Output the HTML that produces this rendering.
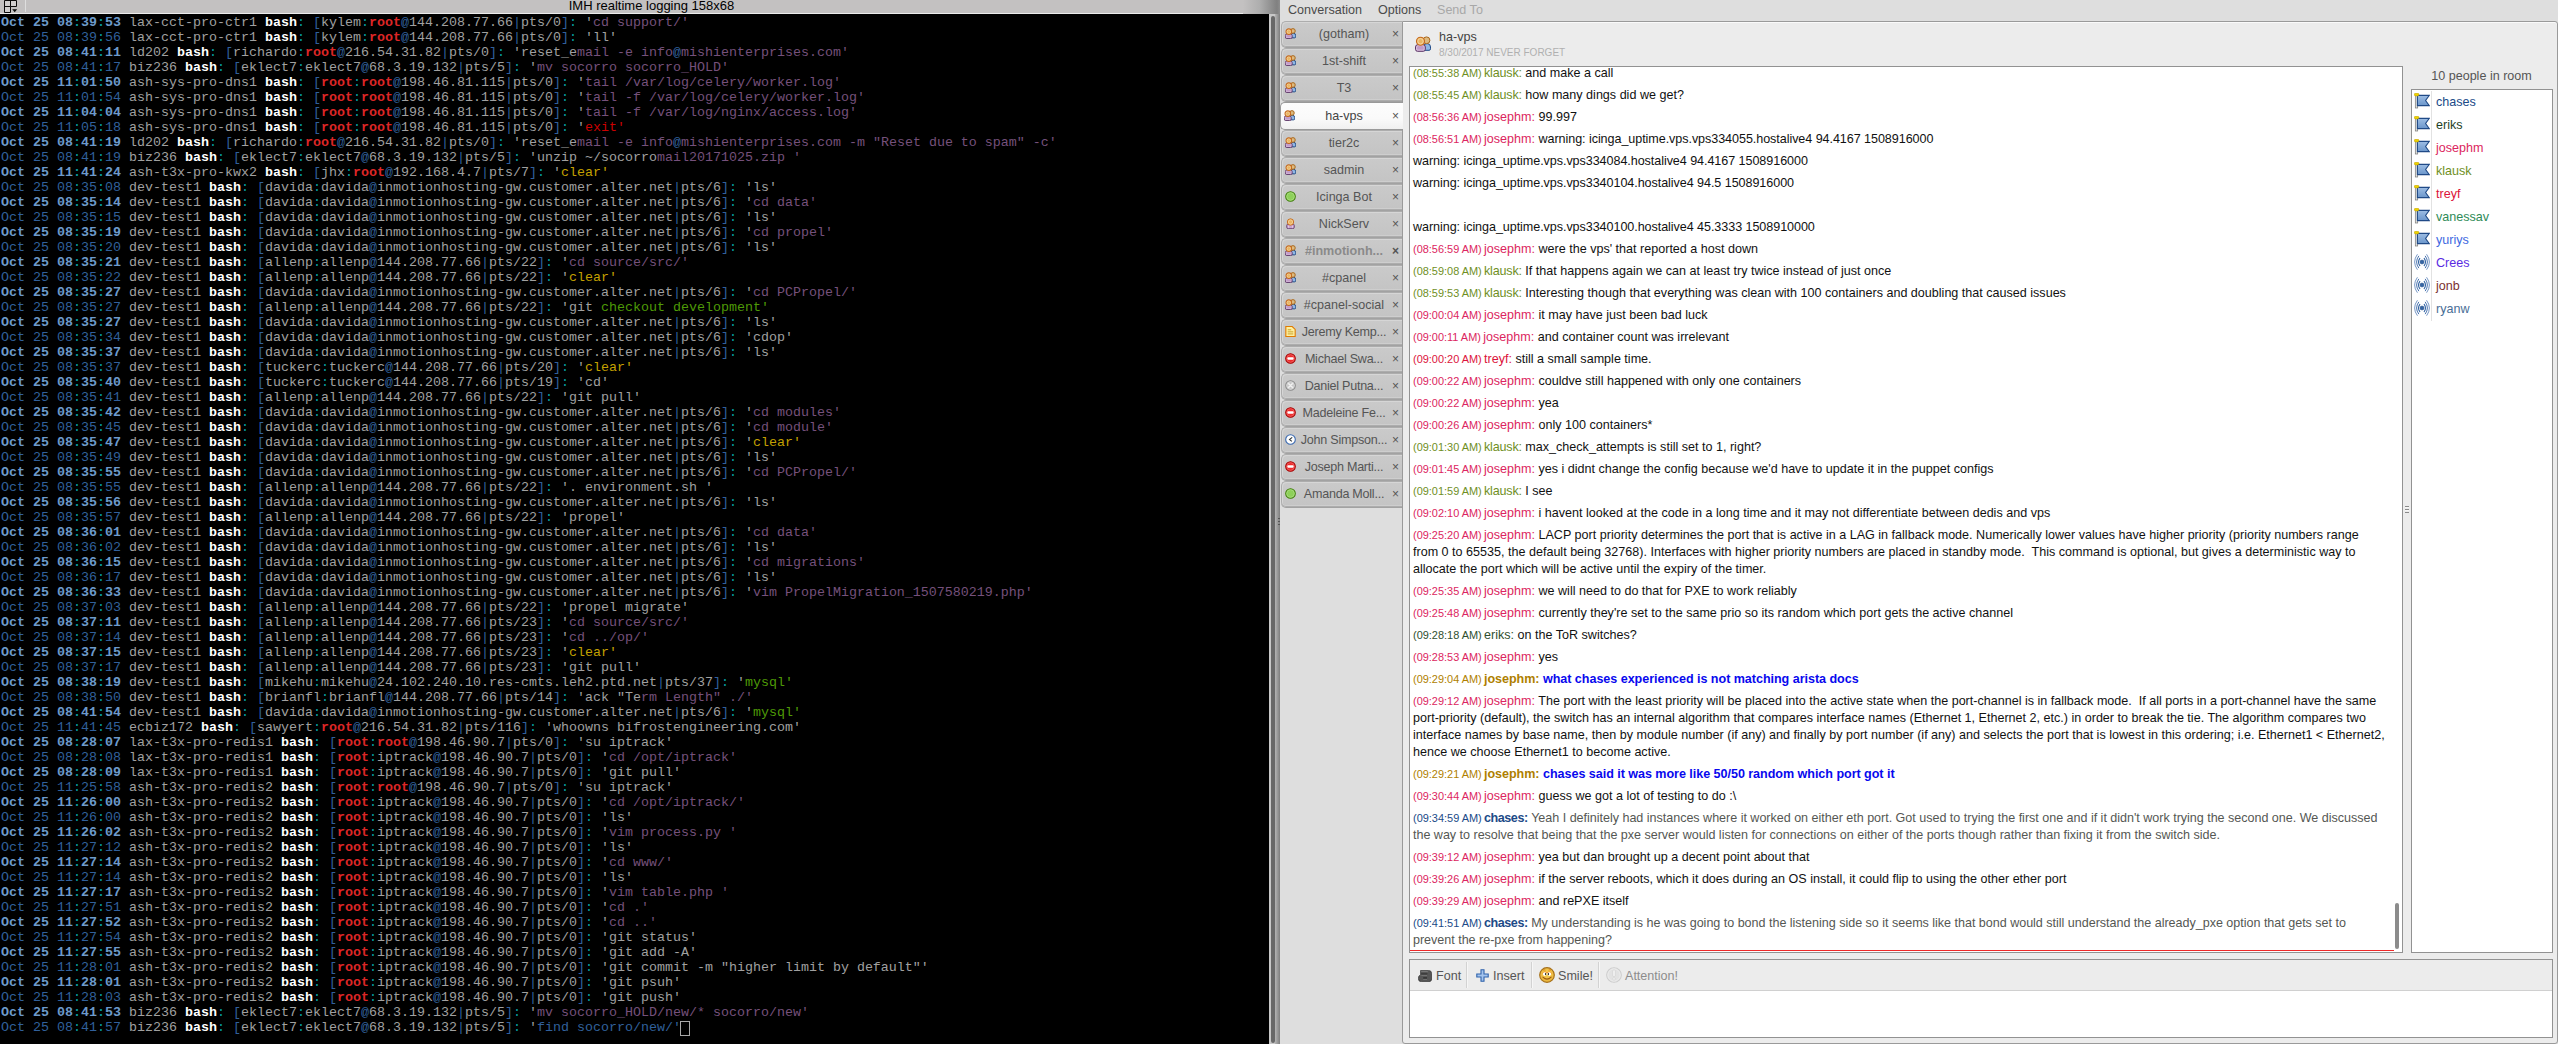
<!DOCTYPE html>
<html lang="en"><head><meta charset="utf-8"><title>IMH realtime logging / ha-vps</title>
<style>
*{margin:0;padding:0;box-sizing:border-box}
html,body{width:2558px;height:1044px;overflow:hidden;background:#dedede}
body{position:relative;font-family:"Liberation Sans",sans-serif;font-size:12.57px;color:#4a4a4a}
i{font-style:normal}
/* ---- terminal window ---- */
#ttitle{position:absolute;left:0;top:0;width:1280px;height:14px;background:#c3c1c1;border-bottom:1px solid #ececec}
#ttitle .t{position:absolute;left:0;width:1303px;top:-2px;text-align:center;font-size:13px;line-height:15px;color:#000;white-space:pre}
#ticon{position:absolute;left:0;top:0}
#tsep{position:absolute;left:25px;top:0;width:1px;height:12px;background:#dedede}
#term{position:absolute;left:0;top:14px;width:1269px;height:1030px;background:#000;overflow:hidden;
 font-family:"Liberation Mono",monospace;font-size:13.333px;line-height:15px;color:#a0a0a0;padding-left:1px;padding-top:1px}
#term div{height:15px;white-space:pre}
#term .D{color:#6d9acb;font-weight:bold}
#term .d{color:#31609c}
#term .c{color:#06989a}
#term .W{color:#fff;font-weight:bold}
#term .b{color:#31609c}
#term .R{color:#dc2626;font-weight:bold}
#term .m{color:#75507b}
#term .r{color:#cc0000}
#term .y{color:#c4a000}
#term .G{color:#4e9a06}
#term .cur{display:inline-block;width:10px;height:15px;border:1px solid #a8a8a8;vertical-align:top;margin-top:1px;margin-left:-1px}
#tscroll{position:absolute;left:1269px;top:14px;width:6px;height:1030px;background:#c8c8c8}
#tscroll b{position:absolute;left:2px;top:2px;width:4px;height:1027px;border-radius:2px 2px 2px 2px;background:#686868}
#tedge{position:absolute;left:1275px;top:14px;width:5px;height:1030px;background:linear-gradient(90deg,#b4b4b4,#7e7e7e)}
#tgrip{position:absolute;left:1278px;top:518px;width:2px;height:7px;background:linear-gradient(#555 0 1px,transparent 1px 3px,#555 3px 4px,transparent 4px 6px,#555 6px 7px)}
#tgrad{position:absolute;left:1243px;top:0;width:37px;height:14px;background:linear-gradient(90deg,#c3c1c1,#aeaeae 45%,#808080 92%,#8e8e8e)}
/* ---- pidgin ---- */
#pg{position:absolute;left:1280px;top:0;width:1278px;height:1044px;background:#dedede}
#menu{position:absolute;left:0;top:0;width:1278px;height:21px}
#menu span{position:absolute;top:3px;line-height:15px;white-space:pre}
#page{position:absolute;left:1402px;top:21px;width:1156px;height:1023px;background:#ececec;border:1px solid #9a9a9a;border-radius:0 3px 3px 3px;box-shadow:inset 0 1px 0 #fafafa}
.tab{position:absolute;left:1281px;width:121px;height:26px;background:linear-gradient(#cacaca,#c4c4c4);border:1px solid #adadad;border-right:0;border-radius:5px 0 0 5px;
  box-shadow:inset 1px 1px 0 #d6d6d6,inset 0 -1px 0 #cecece,0 1px 0 #a2a2a2;white-space:pre;color:#555}
.tab.act{left:1280px;width:123px;height:28px;background:linear-gradient(#fdfdfd,#fafafa 60%,#f0f0f0);border-color:#9a9a9a;box-shadow:none;color:#444;z-index:3}
.tab.act .ic{top:7px}.tab.act .tl{top:5px;left:18px}.tab.act .tx{top:6px;left:111px}
.tab.unr{color:#8a8a8a;font-weight:bold}
.tab .ic{position:absolute;left:3px;top:6px}
.tab .tl{position:absolute;left:17px;width:90px;top:4px;line-height:16px;text-align:center;overflow:hidden}
.tab .tx{position:absolute;left:110px;top:5px;line-height:15px;font-size:12px;color:#555}
#hicon{position:absolute;left:1415px;top:36px}
#hname{position:absolute;left:1439px;top:30px;line-height:15px;color:#444;white-space:pre}
#htopic{position:absolute;left:1439px;top:46px;line-height:13px;font-size:10px;color:#b0b0b0;white-space:pre}
#chatbox{position:absolute;left:1409px;top:66px;width:994px;height:887px;background:#fff;border:1px solid #929292;overflow:hidden}
#chatin{position:absolute;left:-1410px;top:-67px;width:2558px;height:1044px}
.ln{position:absolute;left:1413px;height:17px;line-height:17px;white-space:pre;color:#111;font-size:12.57px}
.ln .ts{font-size:10.95px;margin-right:-1.2px}
.k .ts,.k .nm{color:#6f8f1f}
.k .nm{letter-spacing:-.18px}
.j .ts,.j .nm{color:#dc2660}
.t .ts,.t .nm{color:#dc143c}
.e .ts,.e .nm{color:#2f4f2f}
.c .ts,.c .nm{color:#204a87}
.c .nm{font-weight:bold;letter-spacing:-.45px}
.c .tx{color:#555753;letter-spacing:-.025px}
.wp,.w .tx{letter-spacing:-.06px}
.h .ts,.h .nm{color:#af7f00}
.h .nm{font-weight:bold;letter-spacing:-.05px}
.h .tx{color:#0808ee;font-weight:bold;letter-spacing:-.04px}
#redline{position:absolute;left:1410px;top:950px;width:984px;height:1px;background:#ef2929}
#cscroll{position:absolute;left:2395px;top:903px;width:4px;height:46px;border-radius:2px;background:#8c8c8c}
#grip{position:absolute;left:2405px;top:506px;width:4px;height:7px;background:linear-gradient(#8a8a8a 0 1px,#f6f6f6 1px 2px,transparent 2px 3px,#8a8a8a 3px 4px,#f6f6f6 4px 5px,transparent 5px 6px,#8a8a8a 6px 7px)}
#ulabel{position:absolute;left:2411px;width:141px;top:69px;line-height:15px;text-align:center;white-space:pre;color:#555}
#ulist{position:absolute;left:2411px;top:89px;width:142px;height:864px;background:#fff;border:1px solid #929292;overflow:hidden}
#ulist .vs{position:absolute;left:19px;top:1px;width:1px;height:230px;background:#e2e2e2}
.u{position:absolute;left:0;width:140px;height:23px;white-space:pre}
.u span{position:absolute;left:24px;top:5px;line-height:17px}
#inbox{position:absolute;left:1409px;top:959px;width:1144px;height:79px;background:#fff;border:1px solid #929292}
#tb{position:absolute;left:0;top:0;width:1142px;height:31px;background:#ececec;border-bottom:1px solid #d0d0d0}
#tb span{position:absolute;top:8px;line-height:16px;white-space:pre;color:#555}
#tb .sep{position:absolute;top:2px;width:1px;height:26px;background:#d2d2d2;border-right:1px solid #f6f6f6;box-sizing:content-box}
#tb svg{position:absolute}

</style></head>
<body>
<svg width="0" height="0" style="position:absolute"><defs><linearGradient id="fg" x1="0" y1="0" x2="0" y2="1"><stop offset="0" stop-color="#9dbde4"/><stop offset="1" stop-color="#6b96cb"/></linearGradient></defs></svg>
<div id="ttitle"><svg id="ticon" width="20" height="13" viewBox="0 0 20 13"><path d="M4.5 .5 H16.5 V6.5 H10.5 V12.5 H4.5Z" fill="#cfcdcd" stroke="#0a0a0a" stroke-width="1"/><path d="M10.5 .5 V6.5 H4.5" stroke="#0a0a0a" stroke-width="1" fill="none"/><path d="M12.2 9.2 H17.2 L14.7 12.2Z" fill="#0a0a0a"/></svg><div id="tsep"></div><div class="t">IMH realtime logging 158x68</div></div>
<div id="term">
<div><i class="D">Oct 25 08<i class="c">:</i>39<i class="c">:</i>53</i> lax-cct-pro-ctr1 <i class="W">bash</i><i class="c">:</i> <i class="b">[</i>kylem<i class="c">:</i><i class="R">root</i><i class="b">@</i>144.208.77.66<i class="b">|</i>pts/0<i class="b">]</i><i class="c">:</i> '<i class="m">cd support/'</i></div>
<div><i class="d">Oct 25 08<i class="c">:</i>39<i class="c">:</i>56</i> lax-cct-pro-ctr1 <i class="W">bash</i><i class="c">:</i> <i class="b">[</i>kylem<i class="c">:</i><i class="R">root</i><i class="b">@</i>144.208.77.66<i class="b">|</i>pts/0<i class="b">]</i><i class="c">:</i> 'll'</div>
<div><i class="D">Oct 25 08<i class="c">:</i>41<i class="c">:</i>11</i> ld202 <i class="W">bash</i><i class="c">:</i> <i class="b">[</i>richardo<i class="c">:</i><i class="R">root</i><i class="b">@</i>216.54.31.82<i class="b">|</i>pts/0<i class="b">]</i><i class="c">:</i> 'reset_e<i class="m">mail -e info</i><i class="b">@</i><i class="m">mishienterprises.com'</i></div>
<div><i class="d">Oct 25 08<i class="c">:</i>41<i class="c">:</i>17</i> biz236 <i class="W">bash</i><i class="c">:</i> <i class="b">[</i>eklect7<i class="c">:</i>eklect7<i class="b">@</i>68.3.19.132<i class="b">|</i>pts/5<i class="b">]</i><i class="c">:</i> '<i class="m">mv socorro socorro_HOLD'</i></div>
<div><i class="D">Oct 25 11<i class="c">:</i>01<i class="c">:</i>50</i> ash-sys-pro-dns1 <i class="W">bash</i><i class="c">:</i> <i class="b">[</i><i class="R">root</i><i class="c">:</i><i class="R">root</i><i class="b">@</i>198.46.81.115<i class="b">|</i>pts/0<i class="b">]</i><i class="c">:</i> '<i class="m">tail /var/log/celery/worker.log'</i></div>
<div><i class="d">Oct 25 11<i class="c">:</i>01<i class="c">:</i>54</i> ash-sys-pro-dns1 <i class="W">bash</i><i class="c">:</i> <i class="b">[</i><i class="R">root</i><i class="c">:</i><i class="R">root</i><i class="b">@</i>198.46.81.115<i class="b">|</i>pts/0<i class="b">]</i><i class="c">:</i> '<i class="m">tail -f /var/log/celery/worker.log'</i></div>
<div><i class="D">Oct 25 11<i class="c">:</i>04<i class="c">:</i>04</i> ash-sys-pro-dns1 <i class="W">bash</i><i class="c">:</i> <i class="b">[</i><i class="R">root</i><i class="c">:</i><i class="R">root</i><i class="b">@</i>198.46.81.115<i class="b">|</i>pts/0<i class="b">]</i><i class="c">:</i> '<i class="m">tail -f /var/log/nginx/access.log'</i></div>
<div><i class="d">Oct 25 11<i class="c">:</i>05<i class="c">:</i>18</i> ash-sys-pro-dns1 <i class="W">bash</i><i class="c">:</i> <i class="b">[</i><i class="R">root</i><i class="c">:</i><i class="R">root</i><i class="b">@</i>198.46.81.115<i class="b">|</i>pts/0<i class="b">]</i><i class="c">:</i> '<i class="r">exit'</i></div>
<div><i class="D">Oct 25 08<i class="c">:</i>41<i class="c">:</i>19</i> ld202 <i class="W">bash</i><i class="c">:</i> <i class="b">[</i>richardo<i class="c">:</i><i class="R">root</i><i class="b">@</i>216.54.31.82<i class="b">|</i>pts/0<i class="b">]</i><i class="c">:</i> 'reset_e<i class="m">mail -e info</i><i class="b">@</i><i class="m">mishienterprises.com -m "Reset due to spam" -c'</i></div>
<div><i class="d">Oct 25 08<i class="c">:</i>41<i class="c">:</i>19</i> biz236 <i class="W">bash</i><i class="c">:</i> <i class="b">[</i>eklect7<i class="c">:</i>eklect7<i class="b">@</i>68.3.19.132<i class="b">|</i>pts/5<i class="b">]</i><i class="c">:</i> 'unzip ~/socorro<i class="m">mail20171025.zip '</i></div>
<div><i class="D">Oct 25 11<i class="c">:</i>41<i class="c">:</i>24</i> ash-t3x-pro-kwx2 <i class="W">bash</i><i class="c">:</i> <i class="b">[</i>jhx<i class="c">:</i><i class="R">root</i><i class="b">@</i>192.168.4.7<i class="b">|</i>pts/7<i class="b">]</i><i class="c">:</i> '<i class="y">clear'</i></div>
<div><i class="d">Oct 25 08<i class="c">:</i>35<i class="c">:</i>08</i> dev-test1 <i class="W">bash</i><i class="c">:</i> <i class="b">[</i>davida<i class="c">:</i>davida<i class="b">@</i>inmotionhosting-gw.customer.alter.net<i class="b">|</i>pts/6<i class="b">]</i><i class="c">:</i> 'ls'</div>
<div><i class="D">Oct 25 08<i class="c">:</i>35<i class="c">:</i>14</i> dev-test1 <i class="W">bash</i><i class="c">:</i> <i class="b">[</i>davida<i class="c">:</i>davida<i class="b">@</i>inmotionhosting-gw.customer.alter.net<i class="b">|</i>pts/6<i class="b">]</i><i class="c">:</i> '<i class="m">cd data'</i></div>
<div><i class="d">Oct 25 08<i class="c">:</i>35<i class="c">:</i>15</i> dev-test1 <i class="W">bash</i><i class="c">:</i> <i class="b">[</i>davida<i class="c">:</i>davida<i class="b">@</i>inmotionhosting-gw.customer.alter.net<i class="b">|</i>pts/6<i class="b">]</i><i class="c">:</i> 'ls'</div>
<div><i class="D">Oct 25 08<i class="c">:</i>35<i class="c">:</i>19</i> dev-test1 <i class="W">bash</i><i class="c">:</i> <i class="b">[</i>davida<i class="c">:</i>davida<i class="b">@</i>inmotionhosting-gw.customer.alter.net<i class="b">|</i>pts/6<i class="b">]</i><i class="c">:</i> '<i class="m">cd propel'</i></div>
<div><i class="d">Oct 25 08<i class="c">:</i>35<i class="c">:</i>20</i> dev-test1 <i class="W">bash</i><i class="c">:</i> <i class="b">[</i>davida<i class="c">:</i>davida<i class="b">@</i>inmotionhosting-gw.customer.alter.net<i class="b">|</i>pts/6<i class="b">]</i><i class="c">:</i> 'ls'</div>
<div><i class="D">Oct 25 08<i class="c">:</i>35<i class="c">:</i>21</i> dev-test1 <i class="W">bash</i><i class="c">:</i> <i class="b">[</i>allenp<i class="c">:</i>allenp<i class="b">@</i>144.208.77.66<i class="b">|</i>pts/22<i class="b">]</i><i class="c">:</i> '<i class="m">cd source/src/'</i></div>
<div><i class="d">Oct 25 08<i class="c">:</i>35<i class="c">:</i>22</i> dev-test1 <i class="W">bash</i><i class="c">:</i> <i class="b">[</i>allenp<i class="c">:</i>allenp<i class="b">@</i>144.208.77.66<i class="b">|</i>pts/22<i class="b">]</i><i class="c">:</i> '<i class="y">clear'</i></div>
<div><i class="D">Oct 25 08<i class="c">:</i>35<i class="c">:</i>27</i> dev-test1 <i class="W">bash</i><i class="c">:</i> <i class="b">[</i>davida<i class="c">:</i>davida<i class="b">@</i>inmotionhosting-gw.customer.alter.net<i class="b">|</i>pts/6<i class="b">]</i><i class="c">:</i> '<i class="m">cd PCPropel/'</i></div>
<div><i class="d">Oct 25 08<i class="c">:</i>35<i class="c">:</i>27</i> dev-test1 <i class="W">bash</i><i class="c">:</i> <i class="b">[</i>allenp<i class="c">:</i>allenp<i class="b">@</i>144.208.77.66<i class="b">|</i>pts/22<i class="b">]</i><i class="c">:</i> 'git <i class="G">checkout development'</i></div>
<div><i class="D">Oct 25 08<i class="c">:</i>35<i class="c">:</i>27</i> dev-test1 <i class="W">bash</i><i class="c">:</i> <i class="b">[</i>davida<i class="c">:</i>davida<i class="b">@</i>inmotionhosting-gw.customer.alter.net<i class="b">|</i>pts/6<i class="b">]</i><i class="c">:</i> 'ls'</div>
<div><i class="d">Oct 25 08<i class="c">:</i>35<i class="c">:</i>34</i> dev-test1 <i class="W">bash</i><i class="c">:</i> <i class="b">[</i>davida<i class="c">:</i>davida<i class="b">@</i>inmotionhosting-gw.customer.alter.net<i class="b">|</i>pts/6<i class="b">]</i><i class="c">:</i> 'cdop'</div>
<div><i class="D">Oct 25 08<i class="c">:</i>35<i class="c">:</i>37</i> dev-test1 <i class="W">bash</i><i class="c">:</i> <i class="b">[</i>davida<i class="c">:</i>davida<i class="b">@</i>inmotionhosting-gw.customer.alter.net<i class="b">|</i>pts/6<i class="b">]</i><i class="c">:</i> 'ls'</div>
<div><i class="d">Oct 25 08<i class="c">:</i>35<i class="c">:</i>37</i> dev-test1 <i class="W">bash</i><i class="c">:</i> <i class="b">[</i>tuckerc<i class="c">:</i>tuckerc<i class="b">@</i>144.208.77.66<i class="b">|</i>pts/20<i class="b">]</i><i class="c">:</i> '<i class="y">clear'</i></div>
<div><i class="D">Oct 25 08<i class="c">:</i>35<i class="c">:</i>40</i> dev-test1 <i class="W">bash</i><i class="c">:</i> <i class="b">[</i>tuckerc<i class="c">:</i>tuckerc<i class="b">@</i>144.208.77.66<i class="b">|</i>pts/19<i class="b">]</i><i class="c">:</i> 'cd'</div>
<div><i class="d">Oct 25 08<i class="c">:</i>35<i class="c">:</i>41</i> dev-test1 <i class="W">bash</i><i class="c">:</i> <i class="b">[</i>allenp<i class="c">:</i>allenp<i class="b">@</i>144.208.77.66<i class="b">|</i>pts/22<i class="b">]</i><i class="c">:</i> 'git pull'</div>
<div><i class="D">Oct 25 08<i class="c">:</i>35<i class="c">:</i>42</i> dev-test1 <i class="W">bash</i><i class="c">:</i> <i class="b">[</i>davida<i class="c">:</i>davida<i class="b">@</i>inmotionhosting-gw.customer.alter.net<i class="b">|</i>pts/6<i class="b">]</i><i class="c">:</i> '<i class="m">cd modules'</i></div>
<div><i class="d">Oct 25 08<i class="c">:</i>35<i class="c">:</i>45</i> dev-test1 <i class="W">bash</i><i class="c">:</i> <i class="b">[</i>davida<i class="c">:</i>davida<i class="b">@</i>inmotionhosting-gw.customer.alter.net<i class="b">|</i>pts/6<i class="b">]</i><i class="c">:</i> '<i class="m">cd module'</i></div>
<div><i class="D">Oct 25 08<i class="c">:</i>35<i class="c">:</i>47</i> dev-test1 <i class="W">bash</i><i class="c">:</i> <i class="b">[</i>davida<i class="c">:</i>davida<i class="b">@</i>inmotionhosting-gw.customer.alter.net<i class="b">|</i>pts/6<i class="b">]</i><i class="c">:</i> '<i class="y">clear'</i></div>
<div><i class="d">Oct 25 08<i class="c">:</i>35<i class="c">:</i>49</i> dev-test1 <i class="W">bash</i><i class="c">:</i> <i class="b">[</i>davida<i class="c">:</i>davida<i class="b">@</i>inmotionhosting-gw.customer.alter.net<i class="b">|</i>pts/6<i class="b">]</i><i class="c">:</i> 'ls'</div>
<div><i class="D">Oct 25 08<i class="c">:</i>35<i class="c">:</i>55</i> dev-test1 <i class="W">bash</i><i class="c">:</i> <i class="b">[</i>davida<i class="c">:</i>davida<i class="b">@</i>inmotionhosting-gw.customer.alter.net<i class="b">|</i>pts/6<i class="b">]</i><i class="c">:</i> '<i class="m">cd PCPropel/'</i></div>
<div><i class="d">Oct 25 08<i class="c">:</i>35<i class="c">:</i>55</i> dev-test1 <i class="W">bash</i><i class="c">:</i> <i class="b">[</i>allenp<i class="c">:</i>allenp<i class="b">@</i>144.208.77.66<i class="b">|</i>pts/22<i class="b">]</i><i class="c">:</i> '. environment.sh '</div>
<div><i class="D">Oct 25 08<i class="c">:</i>35<i class="c">:</i>56</i> dev-test1 <i class="W">bash</i><i class="c">:</i> <i class="b">[</i>davida<i class="c">:</i>davida<i class="b">@</i>inmotionhosting-gw.customer.alter.net<i class="b">|</i>pts/6<i class="b">]</i><i class="c">:</i> 'ls'</div>
<div><i class="d">Oct 25 08<i class="c">:</i>35<i class="c">:</i>57</i> dev-test1 <i class="W">bash</i><i class="c">:</i> <i class="b">[</i>allenp<i class="c">:</i>allenp<i class="b">@</i>144.208.77.66<i class="b">|</i>pts/22<i class="b">]</i><i class="c">:</i> 'propel'</div>
<div><i class="D">Oct 25 08<i class="c">:</i>36<i class="c">:</i>01</i> dev-test1 <i class="W">bash</i><i class="c">:</i> <i class="b">[</i>davida<i class="c">:</i>davida<i class="b">@</i>inmotionhosting-gw.customer.alter.net<i class="b">|</i>pts/6<i class="b">]</i><i class="c">:</i> '<i class="m">cd data'</i></div>
<div><i class="d">Oct 25 08<i class="c">:</i>36<i class="c">:</i>02</i> dev-test1 <i class="W">bash</i><i class="c">:</i> <i class="b">[</i>davida<i class="c">:</i>davida<i class="b">@</i>inmotionhosting-gw.customer.alter.net<i class="b">|</i>pts/6<i class="b">]</i><i class="c">:</i> 'ls'</div>
<div><i class="D">Oct 25 08<i class="c">:</i>36<i class="c">:</i>15</i> dev-test1 <i class="W">bash</i><i class="c">:</i> <i class="b">[</i>davida<i class="c">:</i>davida<i class="b">@</i>inmotionhosting-gw.customer.alter.net<i class="b">|</i>pts/6<i class="b">]</i><i class="c">:</i> '<i class="m">cd migrations'</i></div>
<div><i class="d">Oct 25 08<i class="c">:</i>36<i class="c">:</i>17</i> dev-test1 <i class="W">bash</i><i class="c">:</i> <i class="b">[</i>davida<i class="c">:</i>davida<i class="b">@</i>inmotionhosting-gw.customer.alter.net<i class="b">|</i>pts/6<i class="b">]</i><i class="c">:</i> 'ls'</div>
<div><i class="D">Oct 25 08<i class="c">:</i>36<i class="c">:</i>33</i> dev-test1 <i class="W">bash</i><i class="c">:</i> <i class="b">[</i>davida<i class="c">:</i>davida<i class="b">@</i>inmotionhosting-gw.customer.alter.net<i class="b">|</i>pts/6<i class="b">]</i><i class="c">:</i> '<i class="m">vim PropelMigration_1507580219.php'</i></div>
<div><i class="d">Oct 25 08<i class="c">:</i>37<i class="c">:</i>03</i> dev-test1 <i class="W">bash</i><i class="c">:</i> <i class="b">[</i>allenp<i class="c">:</i>allenp<i class="b">@</i>144.208.77.66<i class="b">|</i>pts/22<i class="b">]</i><i class="c">:</i> 'propel migrate'</div>
<div><i class="D">Oct 25 08<i class="c">:</i>37<i class="c">:</i>11</i> dev-test1 <i class="W">bash</i><i class="c">:</i> <i class="b">[</i>allenp<i class="c">:</i>allenp<i class="b">@</i>144.208.77.66<i class="b">|</i>pts/23<i class="b">]</i><i class="c">:</i> '<i class="m">cd source/src/'</i></div>
<div><i class="d">Oct 25 08<i class="c">:</i>37<i class="c">:</i>14</i> dev-test1 <i class="W">bash</i><i class="c">:</i> <i class="b">[</i>allenp<i class="c">:</i>allenp<i class="b">@</i>144.208.77.66<i class="b">|</i>pts/23<i class="b">]</i><i class="c">:</i> '<i class="m">cd ../op/'</i></div>
<div><i class="D">Oct 25 08<i class="c">:</i>37<i class="c">:</i>15</i> dev-test1 <i class="W">bash</i><i class="c">:</i> <i class="b">[</i>allenp<i class="c">:</i>allenp<i class="b">@</i>144.208.77.66<i class="b">|</i>pts/23<i class="b">]</i><i class="c">:</i> '<i class="y">clear'</i></div>
<div><i class="d">Oct 25 08<i class="c">:</i>37<i class="c">:</i>17</i> dev-test1 <i class="W">bash</i><i class="c">:</i> <i class="b">[</i>allenp<i class="c">:</i>allenp<i class="b">@</i>144.208.77.66<i class="b">|</i>pts/23<i class="b">]</i><i class="c">:</i> 'git pull'</div>
<div><i class="D">Oct 25 08<i class="c">:</i>38<i class="c">:</i>19</i> dev-test1 <i class="W">bash</i><i class="c">:</i> <i class="b">[</i>mikehu<i class="c">:</i>mikehu<i class="b">@</i>24.102.240.10.res-cmts.leh2.ptd.net<i class="b">|</i>pts/37<i class="b">]</i><i class="c">:</i> '<i class="G">mysql'</i></div>
<div><i class="d">Oct 25 08<i class="c">:</i>38<i class="c">:</i>50</i> dev-test1 <i class="W">bash</i><i class="c">:</i> <i class="b">[</i>brianfl<i class="c">:</i>brianfl<i class="b">@</i>144.208.77.66<i class="b">|</i>pts/14<i class="b">]</i><i class="c">:</i> 'ack "Te<i class="m">rm Length" ./'</i></div>
<div><i class="D">Oct 25 08<i class="c">:</i>41<i class="c">:</i>54</i> dev-test1 <i class="W">bash</i><i class="c">:</i> <i class="b">[</i>davida<i class="c">:</i>davida<i class="b">@</i>inmotionhosting-gw.customer.alter.net<i class="b">|</i>pts/6<i class="b">]</i><i class="c">:</i> '<i class="G">mysql'</i></div>
<div><i class="d">Oct 25 11<i class="c">:</i>41<i class="c">:</i>45</i> ecbiz172 <i class="W">bash</i><i class="c">:</i> <i class="b">[</i>sawyert<i class="c">:</i><i class="R">root</i><i class="b">@</i>216.54.31.82<i class="b">|</i>pts/116<i class="b">]</i><i class="c">:</i> 'whoowns bifrostengineering.com'</div>
<div><i class="D">Oct 25 08<i class="c">:</i>28<i class="c">:</i>07</i> lax-t3x-pro-redis1 <i class="W">bash</i><i class="c">:</i> <i class="b">[</i><i class="R">root</i><i class="c">:</i><i class="R">root</i><i class="b">@</i>198.46.90.7<i class="b">|</i>pts/0<i class="b">]</i><i class="c">:</i> 'su iptrack'</div>
<div><i class="d">Oct 25 08<i class="c">:</i>28<i class="c">:</i>08</i> lax-t3x-pro-redis1 <i class="W">bash</i><i class="c">:</i> <i class="b">[</i><i class="R">root</i><i class="c">:</i>iptrack<i class="b">@</i>198.46.90.7<i class="b">|</i>pts/0<i class="b">]</i><i class="c">:</i> '<i class="m">cd /opt/iptrack'</i></div>
<div><i class="D">Oct 25 08<i class="c">:</i>28<i class="c">:</i>09</i> lax-t3x-pro-redis1 <i class="W">bash</i><i class="c">:</i> <i class="b">[</i><i class="R">root</i><i class="c">:</i>iptrack<i class="b">@</i>198.46.90.7<i class="b">|</i>pts/0<i class="b">]</i><i class="c">:</i> 'git pull'</div>
<div><i class="d">Oct 25 11<i class="c">:</i>25<i class="c">:</i>58</i> ash-t3x-pro-redis2 <i class="W">bash</i><i class="c">:</i> <i class="b">[</i><i class="R">root</i><i class="c">:</i><i class="R">root</i><i class="b">@</i>198.46.90.7<i class="b">|</i>pts/0<i class="b">]</i><i class="c">:</i> 'su iptrack'</div>
<div><i class="D">Oct 25 11<i class="c">:</i>26<i class="c">:</i>00</i> ash-t3x-pro-redis2 <i class="W">bash</i><i class="c">:</i> <i class="b">[</i><i class="R">root</i><i class="c">:</i>iptrack<i class="b">@</i>198.46.90.7<i class="b">|</i>pts/0<i class="b">]</i><i class="c">:</i> '<i class="m">cd /opt/iptrack/'</i></div>
<div><i class="d">Oct 25 11<i class="c">:</i>26<i class="c">:</i>00</i> ash-t3x-pro-redis2 <i class="W">bash</i><i class="c">:</i> <i class="b">[</i><i class="R">root</i><i class="c">:</i>iptrack<i class="b">@</i>198.46.90.7<i class="b">|</i>pts/0<i class="b">]</i><i class="c">:</i> 'ls'</div>
<div><i class="D">Oct 25 11<i class="c">:</i>26<i class="c">:</i>02</i> ash-t3x-pro-redis2 <i class="W">bash</i><i class="c">:</i> <i class="b">[</i><i class="R">root</i><i class="c">:</i>iptrack<i class="b">@</i>198.46.90.7<i class="b">|</i>pts/0<i class="b">]</i><i class="c">:</i> '<i class="m">vim process.py '</i></div>
<div><i class="d">Oct 25 11<i class="c">:</i>27<i class="c">:</i>12</i> ash-t3x-pro-redis2 <i class="W">bash</i><i class="c">:</i> <i class="b">[</i><i class="R">root</i><i class="c">:</i>iptrack<i class="b">@</i>198.46.90.7<i class="b">|</i>pts/0<i class="b">]</i><i class="c">:</i> 'ls'</div>
<div><i class="D">Oct 25 11<i class="c">:</i>27<i class="c">:</i>14</i> ash-t3x-pro-redis2 <i class="W">bash</i><i class="c">:</i> <i class="b">[</i><i class="R">root</i><i class="c">:</i>iptrack<i class="b">@</i>198.46.90.7<i class="b">|</i>pts/0<i class="b">]</i><i class="c">:</i> '<i class="m">cd www/'</i></div>
<div><i class="d">Oct 25 11<i class="c">:</i>27<i class="c">:</i>14</i> ash-t3x-pro-redis2 <i class="W">bash</i><i class="c">:</i> <i class="b">[</i><i class="R">root</i><i class="c">:</i>iptrack<i class="b">@</i>198.46.90.7<i class="b">|</i>pts/0<i class="b">]</i><i class="c">:</i> 'ls'</div>
<div><i class="D">Oct 25 11<i class="c">:</i>27<i class="c">:</i>17</i> ash-t3x-pro-redis2 <i class="W">bash</i><i class="c">:</i> <i class="b">[</i><i class="R">root</i><i class="c">:</i>iptrack<i class="b">@</i>198.46.90.7<i class="b">|</i>pts/0<i class="b">]</i><i class="c">:</i> '<i class="m">vim table.php '</i></div>
<div><i class="d">Oct 25 11<i class="c">:</i>27<i class="c">:</i>51</i> ash-t3x-pro-redis2 <i class="W">bash</i><i class="c">:</i> <i class="b">[</i><i class="R">root</i><i class="c">:</i>iptrack<i class="b">@</i>198.46.90.7<i class="b">|</i>pts/0<i class="b">]</i><i class="c">:</i> '<i class="m">cd .'</i></div>
<div><i class="D">Oct 25 11<i class="c">:</i>27<i class="c">:</i>52</i> ash-t3x-pro-redis2 <i class="W">bash</i><i class="c">:</i> <i class="b">[</i><i class="R">root</i><i class="c">:</i>iptrack<i class="b">@</i>198.46.90.7<i class="b">|</i>pts/0<i class="b">]</i><i class="c">:</i> '<i class="m">cd ..'</i></div>
<div><i class="d">Oct 25 11<i class="c">:</i>27<i class="c">:</i>54</i> ash-t3x-pro-redis2 <i class="W">bash</i><i class="c">:</i> <i class="b">[</i><i class="R">root</i><i class="c">:</i>iptrack<i class="b">@</i>198.46.90.7<i class="b">|</i>pts/0<i class="b">]</i><i class="c">:</i> 'git status'</div>
<div><i class="D">Oct 25 11<i class="c">:</i>27<i class="c">:</i>55</i> ash-t3x-pro-redis2 <i class="W">bash</i><i class="c">:</i> <i class="b">[</i><i class="R">root</i><i class="c">:</i>iptrack<i class="b">@</i>198.46.90.7<i class="b">|</i>pts/0<i class="b">]</i><i class="c">:</i> 'git add -A'</div>
<div><i class="d">Oct 25 11<i class="c">:</i>28<i class="c">:</i>01</i> ash-t3x-pro-redis2 <i class="W">bash</i><i class="c">:</i> <i class="b">[</i><i class="R">root</i><i class="c">:</i>iptrack<i class="b">@</i>198.46.90.7<i class="b">|</i>pts/0<i class="b">]</i><i class="c">:</i> 'git commit -m "higher limit by default"'</div>
<div><i class="D">Oct 25 11<i class="c">:</i>28<i class="c">:</i>01</i> ash-t3x-pro-redis2 <i class="W">bash</i><i class="c">:</i> <i class="b">[</i><i class="R">root</i><i class="c">:</i>iptrack<i class="b">@</i>198.46.90.7<i class="b">|</i>pts/0<i class="b">]</i><i class="c">:</i> 'git psuh'</div>
<div><i class="d">Oct 25 11<i class="c">:</i>28<i class="c">:</i>03</i> ash-t3x-pro-redis2 <i class="W">bash</i><i class="c">:</i> <i class="b">[</i><i class="R">root</i><i class="c">:</i>iptrack<i class="b">@</i>198.46.90.7<i class="b">|</i>pts/0<i class="b">]</i><i class="c">:</i> 'git push'</div>
<div><i class="D">Oct 25 08<i class="c">:</i>41<i class="c">:</i>53</i> biz236 <i class="W">bash</i><i class="c">:</i> <i class="b">[</i>eklect7<i class="c">:</i>eklect7<i class="b">@</i>68.3.19.132<i class="b">|</i>pts/5<i class="b">]</i><i class="c">:</i> '<i class="m">mv socorro_HOLD/new/* socorro/new'</i></div>
<div><i class="d">Oct 25 08<i class="c">:</i>41<i class="c">:</i>57</i> biz236 <i class="W">bash</i><i class="c">:</i> <i class="b">[</i>eklect7<i class="c">:</i>eklect7<i class="b">@</i>68.3.19.132<i class="b">|</i>pts/5<i class="b">]</i><i class="c">:</i> '<i class="b">find socorro/new/'</i><i class="cur"></i></div>
</div>
<div id="tgrad"></div><div id="tscroll"><b></b></div><div id="tedge"></div><div id="tgrip"></div>
<div id="pg">
<div id="menu"><span style="left:8px">Conversation</span><span style="left:98px">Options</span><span style="left:157px;color:#a8a8a8">Send To</span></div>
</div>
<div id="page"></div>
<div class="tab " style="top:21px"><svg class="ic" width="11" height="11" viewBox="0 0 16 16"><path d="M9 14.3 V10 Q9 7.5 12 7.5 Q15.5 7.5 15.5 11 V12.8 Q15.5 14.3 14 14.3Z" fill="#8fb8e6" stroke="#204a87" stroke-width="1.45"/><circle cx="11.5" cy="4.3" r="3.4" fill="#dcb980" stroke="#a8671b" stroke-width="1.45"/><path d="M.5 13.3 V11 Q.5 8.5 3.5 8.5 H7.5 Q10.3 8.5 10.3 11 V13.3 Q10.3 15.3 8.3 15.3 H2.5 Q.5 15.3 .5 13.3Z" fill="#c29ac8" stroke="#5c3566" stroke-width="1.45"/><path d="M1.6 13.2 V11 Q1.6 9.6 3.5 9.6 H7.5 Q9.2 9.6 9.2 11 V13.2 Q9.2 14.2 8.2 14.2 H2.6 Q1.6 14.2 1.6 13.2Z" fill="none" stroke="#fff" stroke-opacity=".5" stroke-width=".8"/><circle cx="5.5" cy="5.3" r="4" fill="#eab664" stroke="#c4671a" stroke-width="1.55"/><circle cx="5.5" cy="5.3" r="2.7" fill="none" stroke="#fbe7c6" stroke-opacity=".8" stroke-width=".8"/></svg><span class="tl">(gotham)</span><span class="tx">×</span></div>
<div class="tab " style="top:48px"><svg class="ic" width="11" height="11" viewBox="0 0 16 16"><path d="M9 14.3 V10 Q9 7.5 12 7.5 Q15.5 7.5 15.5 11 V12.8 Q15.5 14.3 14 14.3Z" fill="#8fb8e6" stroke="#204a87" stroke-width="1.45"/><circle cx="11.5" cy="4.3" r="3.4" fill="#dcb980" stroke="#a8671b" stroke-width="1.45"/><path d="M.5 13.3 V11 Q.5 8.5 3.5 8.5 H7.5 Q10.3 8.5 10.3 11 V13.3 Q10.3 15.3 8.3 15.3 H2.5 Q.5 15.3 .5 13.3Z" fill="#c29ac8" stroke="#5c3566" stroke-width="1.45"/><path d="M1.6 13.2 V11 Q1.6 9.6 3.5 9.6 H7.5 Q9.2 9.6 9.2 11 V13.2 Q9.2 14.2 8.2 14.2 H2.6 Q1.6 14.2 1.6 13.2Z" fill="none" stroke="#fff" stroke-opacity=".5" stroke-width=".8"/><circle cx="5.5" cy="5.3" r="4" fill="#eab664" stroke="#c4671a" stroke-width="1.55"/><circle cx="5.5" cy="5.3" r="2.7" fill="none" stroke="#fbe7c6" stroke-opacity=".8" stroke-width=".8"/></svg><span class="tl">1st-shift</span><span class="tx">×</span></div>
<div class="tab " style="top:75px"><svg class="ic" width="11" height="11" viewBox="0 0 16 16"><path d="M9 14.3 V10 Q9 7.5 12 7.5 Q15.5 7.5 15.5 11 V12.8 Q15.5 14.3 14 14.3Z" fill="#8fb8e6" stroke="#204a87" stroke-width="1.45"/><circle cx="11.5" cy="4.3" r="3.4" fill="#dcb980" stroke="#a8671b" stroke-width="1.45"/><path d="M.5 13.3 V11 Q.5 8.5 3.5 8.5 H7.5 Q10.3 8.5 10.3 11 V13.3 Q10.3 15.3 8.3 15.3 H2.5 Q.5 15.3 .5 13.3Z" fill="#c29ac8" stroke="#5c3566" stroke-width="1.45"/><path d="M1.6 13.2 V11 Q1.6 9.6 3.5 9.6 H7.5 Q9.2 9.6 9.2 11 V13.2 Q9.2 14.2 8.2 14.2 H2.6 Q1.6 14.2 1.6 13.2Z" fill="none" stroke="#fff" stroke-opacity=".5" stroke-width=".8"/><circle cx="5.5" cy="5.3" r="4" fill="#eab664" stroke="#c4671a" stroke-width="1.55"/><circle cx="5.5" cy="5.3" r="2.7" fill="none" stroke="#fbe7c6" stroke-opacity=".8" stroke-width=".8"/></svg><span class="tl">T3</span><span class="tx">×</span></div>
<div class="tab act" style="top:102px"><svg class="ic" width="11" height="11" viewBox="0 0 16 16"><path d="M9 14.3 V10 Q9 7.5 12 7.5 Q15.5 7.5 15.5 11 V12.8 Q15.5 14.3 14 14.3Z" fill="#8fb8e6" stroke="#204a87" stroke-width="1.45"/><circle cx="11.5" cy="4.3" r="3.4" fill="#dcb980" stroke="#a8671b" stroke-width="1.45"/><path d="M.5 13.3 V11 Q.5 8.5 3.5 8.5 H7.5 Q10.3 8.5 10.3 11 V13.3 Q10.3 15.3 8.3 15.3 H2.5 Q.5 15.3 .5 13.3Z" fill="#c29ac8" stroke="#5c3566" stroke-width="1.45"/><path d="M1.6 13.2 V11 Q1.6 9.6 3.5 9.6 H7.5 Q9.2 9.6 9.2 11 V13.2 Q9.2 14.2 8.2 14.2 H2.6 Q1.6 14.2 1.6 13.2Z" fill="none" stroke="#fff" stroke-opacity=".5" stroke-width=".8"/><circle cx="5.5" cy="5.3" r="4" fill="#eab664" stroke="#c4671a" stroke-width="1.55"/><circle cx="5.5" cy="5.3" r="2.7" fill="none" stroke="#fbe7c6" stroke-opacity=".8" stroke-width=".8"/></svg><span class="tl">ha-vps</span><span class="tx">×</span></div>
<div class="tab " style="top:130px"><svg class="ic" width="11" height="11" viewBox="0 0 16 16"><path d="M9 14.3 V10 Q9 7.5 12 7.5 Q15.5 7.5 15.5 11 V12.8 Q15.5 14.3 14 14.3Z" fill="#8fb8e6" stroke="#204a87" stroke-width="1.45"/><circle cx="11.5" cy="4.3" r="3.4" fill="#dcb980" stroke="#a8671b" stroke-width="1.45"/><path d="M.5 13.3 V11 Q.5 8.5 3.5 8.5 H7.5 Q10.3 8.5 10.3 11 V13.3 Q10.3 15.3 8.3 15.3 H2.5 Q.5 15.3 .5 13.3Z" fill="#c29ac8" stroke="#5c3566" stroke-width="1.45"/><path d="M1.6 13.2 V11 Q1.6 9.6 3.5 9.6 H7.5 Q9.2 9.6 9.2 11 V13.2 Q9.2 14.2 8.2 14.2 H2.6 Q1.6 14.2 1.6 13.2Z" fill="none" stroke="#fff" stroke-opacity=".5" stroke-width=".8"/><circle cx="5.5" cy="5.3" r="4" fill="#eab664" stroke="#c4671a" stroke-width="1.55"/><circle cx="5.5" cy="5.3" r="2.7" fill="none" stroke="#fbe7c6" stroke-opacity=".8" stroke-width=".8"/></svg><span class="tl">tier2c</span><span class="tx">×</span></div>
<div class="tab " style="top:157px"><svg class="ic" width="11" height="11" viewBox="0 0 16 16"><path d="M9 14.3 V10 Q9 7.5 12 7.5 Q15.5 7.5 15.5 11 V12.8 Q15.5 14.3 14 14.3Z" fill="#8fb8e6" stroke="#204a87" stroke-width="1.45"/><circle cx="11.5" cy="4.3" r="3.4" fill="#dcb980" stroke="#a8671b" stroke-width="1.45"/><path d="M.5 13.3 V11 Q.5 8.5 3.5 8.5 H7.5 Q10.3 8.5 10.3 11 V13.3 Q10.3 15.3 8.3 15.3 H2.5 Q.5 15.3 .5 13.3Z" fill="#c29ac8" stroke="#5c3566" stroke-width="1.45"/><path d="M1.6 13.2 V11 Q1.6 9.6 3.5 9.6 H7.5 Q9.2 9.6 9.2 11 V13.2 Q9.2 14.2 8.2 14.2 H2.6 Q1.6 14.2 1.6 13.2Z" fill="none" stroke="#fff" stroke-opacity=".5" stroke-width=".8"/><circle cx="5.5" cy="5.3" r="4" fill="#eab664" stroke="#c4671a" stroke-width="1.55"/><circle cx="5.5" cy="5.3" r="2.7" fill="none" stroke="#fbe7c6" stroke-opacity=".8" stroke-width=".8"/></svg><span class="tl">sadmin</span><span class="tx">×</span></div>
<div class="tab " style="top:184px"><svg class="ic" width="11" height="11" viewBox="0 0 16 16"><circle cx="8" cy="8" r="7" fill="#8ed05a" stroke="#3f7d0a" stroke-width="1.5"/><circle cx="8" cy="8" r="5.6" fill="none" stroke="#c3eda0" stroke-opacity=".7" stroke-width="1"/></svg><span class="tl">Icinga Bot</span><span class="tx">×</span></div>
<div class="tab " style="top:211px"><svg class="ic" width="11" height="11" viewBox="0 0 16 16"><path d="M2.5 13.3 V11 Q2.5 8.5 5.5 8.5 H10.5 Q13.5 8.5 13.5 11 V13.3 Q13.5 15.5 11.3 15.5 H4.7 Q2.5 15.5 2.5 13.3Z" fill="#c9a3ce" stroke="#5c3566" stroke-width="1.2"/><path d="M5 14 V11.5 M11 14 V11.5" stroke="#fff" stroke-opacity=".7" stroke-width="1"/><circle cx="8" cy="5.8" r="4.6" fill="#eab664" stroke="#c4671a" stroke-width="1.3"/><circle cx="8" cy="5.8" r="3.1" fill="none" stroke="#fbe7c6" stroke-opacity=".8" stroke-width=".9"/></svg><span class="tl">NickServ</span><span class="tx">×</span></div>
<div class="tab unr" style="top:238px"><svg class="ic" width="11" height="11" viewBox="0 0 16 16"><path d="M9 14.3 V10 Q9 7.5 12 7.5 Q15.5 7.5 15.5 11 V12.8 Q15.5 14.3 14 14.3Z" fill="#8fb8e6" stroke="#204a87" stroke-width="1.45"/><circle cx="11.5" cy="4.3" r="3.4" fill="#dcb980" stroke="#a8671b" stroke-width="1.45"/><path d="M.5 13.3 V11 Q.5 8.5 3.5 8.5 H7.5 Q10.3 8.5 10.3 11 V13.3 Q10.3 15.3 8.3 15.3 H2.5 Q.5 15.3 .5 13.3Z" fill="#c29ac8" stroke="#5c3566" stroke-width="1.45"/><path d="M1.6 13.2 V11 Q1.6 9.6 3.5 9.6 H7.5 Q9.2 9.6 9.2 11 V13.2 Q9.2 14.2 8.2 14.2 H2.6 Q1.6 14.2 1.6 13.2Z" fill="none" stroke="#fff" stroke-opacity=".5" stroke-width=".8"/><circle cx="5.5" cy="5.3" r="4" fill="#eab664" stroke="#c4671a" stroke-width="1.55"/><circle cx="5.5" cy="5.3" r="2.7" fill="none" stroke="#fbe7c6" stroke-opacity=".8" stroke-width=".8"/></svg><span class="tl">#inmotionh...</span><span class="tx">×</span></div>
<div class="tab " style="top:265px"><svg class="ic" width="11" height="11" viewBox="0 0 16 16"><path d="M9 14.3 V10 Q9 7.5 12 7.5 Q15.5 7.5 15.5 11 V12.8 Q15.5 14.3 14 14.3Z" fill="#8fb8e6" stroke="#204a87" stroke-width="1.45"/><circle cx="11.5" cy="4.3" r="3.4" fill="#dcb980" stroke="#a8671b" stroke-width="1.45"/><path d="M.5 13.3 V11 Q.5 8.5 3.5 8.5 H7.5 Q10.3 8.5 10.3 11 V13.3 Q10.3 15.3 8.3 15.3 H2.5 Q.5 15.3 .5 13.3Z" fill="#c29ac8" stroke="#5c3566" stroke-width="1.45"/><path d="M1.6 13.2 V11 Q1.6 9.6 3.5 9.6 H7.5 Q9.2 9.6 9.2 11 V13.2 Q9.2 14.2 8.2 14.2 H2.6 Q1.6 14.2 1.6 13.2Z" fill="none" stroke="#fff" stroke-opacity=".5" stroke-width=".8"/><circle cx="5.5" cy="5.3" r="4" fill="#eab664" stroke="#c4671a" stroke-width="1.55"/><circle cx="5.5" cy="5.3" r="2.7" fill="none" stroke="#fbe7c6" stroke-opacity=".8" stroke-width=".8"/></svg><span class="tl">#cpanel</span><span class="tx">×</span></div>
<div class="tab " style="top:292px"><svg class="ic" width="11" height="11" viewBox="0 0 16 16"><path d="M9 14.3 V10 Q9 7.5 12 7.5 Q15.5 7.5 15.5 11 V12.8 Q15.5 14.3 14 14.3Z" fill="#8fb8e6" stroke="#204a87" stroke-width="1.45"/><circle cx="11.5" cy="4.3" r="3.4" fill="#dcb980" stroke="#a8671b" stroke-width="1.45"/><path d="M.5 13.3 V11 Q.5 8.5 3.5 8.5 H7.5 Q10.3 8.5 10.3 11 V13.3 Q10.3 15.3 8.3 15.3 H2.5 Q.5 15.3 .5 13.3Z" fill="#c29ac8" stroke="#5c3566" stroke-width="1.45"/><path d="M1.6 13.2 V11 Q1.6 9.6 3.5 9.6 H7.5 Q9.2 9.6 9.2 11 V13.2 Q9.2 14.2 8.2 14.2 H2.6 Q1.6 14.2 1.6 13.2Z" fill="none" stroke="#fff" stroke-opacity=".5" stroke-width=".8"/><circle cx="5.5" cy="5.3" r="4" fill="#eab664" stroke="#c4671a" stroke-width="1.55"/><circle cx="5.5" cy="5.3" r="2.7" fill="none" stroke="#fbe7c6" stroke-opacity=".8" stroke-width=".8"/></svg><span class="tl">#cpanel-social</span><span class="tx">×</span></div>
<div class="tab " style="top:319px"><svg class="ic" width="11" height="11" viewBox="0 0 16 16"><path d="M1.2 .8 H10.5 L14.8 5 V15.2 H1.2Z" fill="#fdf0a0" stroke="#e07b00" stroke-width="1.6"/><path d="M4 5.5 H9 M4 8.5 H12 M4 11.5 H12" stroke="#c99a1e" stroke-width="1.3"/></svg><span class="tl" style="letter-spacing:-.25px">Jeremy Kemp...</span><span class="tx">×</span></div>
<div class="tab " style="top:346px"><svg class="ic" width="11" height="11" viewBox="0 0 16 16"><circle cx="8" cy="8" r="7" fill="#ee2c2c" stroke="#a40000" stroke-width="1.5"/><circle cx="8" cy="8" r="5.6" fill="none" stroke="#f78a8a" stroke-opacity=".7" stroke-width="1"/><rect x="3.4" y="6.3" width="9.2" height="3.4" rx="1.2" fill="#fff"/></svg><span class="tl" style="letter-spacing:-.25px">Michael Swa...</span><span class="tx">×</span></div>
<div class="tab " style="top:373px"><svg class="ic" width="11" height="11" viewBox="0 0 16 16"><circle cx="8" cy="8" r="7" fill="#c4c4c4" stroke="#8a8a8a" stroke-width="1.5"/><circle cx="8" cy="8" r="5.5" fill="none" stroke="#e4e4e4" stroke-width="1"/><path d="M5.4 5.4 L10.6 10.6 M10.6 5.4 L5.4 10.6" stroke="#f2f2f2" stroke-width="2.2" stroke-linecap="round"/></svg><span class="tl" style="letter-spacing:-.25px">Daniel Putna...</span><span class="tx">×</span></div>
<div class="tab " style="top:400px"><svg class="ic" width="11" height="11" viewBox="0 0 16 16"><circle cx="8" cy="8" r="7" fill="#ee2c2c" stroke="#a40000" stroke-width="1.5"/><circle cx="8" cy="8" r="5.6" fill="none" stroke="#f78a8a" stroke-opacity=".7" stroke-width="1"/><rect x="3.4" y="6.3" width="9.2" height="3.4" rx="1.2" fill="#fff"/></svg><span class="tl" style="letter-spacing:-.25px">Madeleine Fe...</span><span class="tx">×</span></div>
<div class="tab " style="top:427px"><svg class="ic" width="11" height="11" viewBox="0 0 16 16"><circle cx="8" cy="8" r="7" fill="#fff" stroke="#3868b0" stroke-width="1.6"/><path d="M10.5 4.8 L6.5 8 L10 10.8" fill="none" stroke="#2e3436" stroke-width="1.5"/></svg><span class="tl" style="letter-spacing:-.25px">John Simpson...</span><span class="tx">×</span></div>
<div class="tab " style="top:454px"><svg class="ic" width="11" height="11" viewBox="0 0 16 16"><circle cx="8" cy="8" r="7" fill="#ee2c2c" stroke="#a40000" stroke-width="1.5"/><circle cx="8" cy="8" r="5.6" fill="none" stroke="#f78a8a" stroke-opacity=".7" stroke-width="1"/><rect x="3.4" y="6.3" width="9.2" height="3.4" rx="1.2" fill="#fff"/></svg><span class="tl" style="letter-spacing:-.25px">Joseph Marti...</span><span class="tx">×</span></div>
<div class="tab " style="top:481px"><svg class="ic" width="11" height="11" viewBox="0 0 16 16"><circle cx="8" cy="8" r="7" fill="#8ed05a" stroke="#3f7d0a" stroke-width="1.5"/><circle cx="8" cy="8" r="5.6" fill="none" stroke="#c3eda0" stroke-opacity=".7" stroke-width="1"/></svg><span class="tl" style="letter-spacing:-.25px">Amanda Moll...</span><span class="tx">×</span></div>
<div id="hicon"><svg class="ic" width="16" height="16" viewBox="0 0 16 16"><path d="M9 14.3 V10 Q9 7.5 12 7.5 Q15.5 7.5 15.5 11 V12.8 Q15.5 14.3 14 14.3Z" fill="#8fb8e6" stroke="#204a87" stroke-width="1.0"/><circle cx="11.5" cy="4.3" r="3.4" fill="#dcb980" stroke="#a8671b" stroke-width="1.0"/><path d="M.5 13.3 V11 Q.5 8.5 3.5 8.5 H7.5 Q10.3 8.5 10.3 11 V13.3 Q10.3 15.3 8.3 15.3 H2.5 Q.5 15.3 .5 13.3Z" fill="#c29ac8" stroke="#5c3566" stroke-width="1.0"/><path d="M1.6 13.2 V11 Q1.6 9.6 3.5 9.6 H7.5 Q9.2 9.6 9.2 11 V13.2 Q9.2 14.2 8.2 14.2 H2.6 Q1.6 14.2 1.6 13.2Z" fill="none" stroke="#fff" stroke-opacity=".5" stroke-width=".8"/><circle cx="5.5" cy="5.3" r="4" fill="#eab664" stroke="#c4671a" stroke-width="1.1"/><circle cx="5.5" cy="5.3" r="2.7" fill="none" stroke="#fbe7c6" stroke-opacity=".8" stroke-width=".8"/></svg></div>
<div id="hname">ha-vps</div>
<div id="htopic">8/30/2017 NEVER FORGET</div>
<div id="chatbox"><div id="chatin">
<div class="ln k" style="top:65px"><span class="ts">(08:55:38 AM)</span> <span class="nm">klausk:</span> <span class="tx">and make a call</span></div>
<div class="ln k" style="top:87px"><span class="ts">(08:55:45 AM)</span> <span class="nm">klausk:</span> <span class="tx">how many dings did we get?</span></div>
<div class="ln j" style="top:109px"><span class="ts">(08:56:36 AM)</span> <span class="nm">josephm:</span> <span class="tx">99.997</span></div>
<div class="ln j w" style="top:131px"><span class="ts">(08:56:51 AM)</span> <span class="nm">josephm:</span> <span class="tx">warning: icinga_uptime.vps.vps334055.hostalive4 94.4167 1508916000</span></div>
<div class="ln wp" style="top:153px">warning: icinga_uptime.vps.vps334084.hostalive4 94.4167 1508916000</div>
<div class="ln wp" style="top:175px">warning: icinga_uptime.vps.vps3340104.hostalive4 94.5 1508916000</div>
<div class="ln wp" style="top:219px">warning: icinga_uptime.vps.vps3340100.hostalive4 45.3333 1508910000</div>
<div class="ln j" style="top:241px"><span class="ts">(08:56:59 AM)</span> <span class="nm">josephm:</span> <span class="tx">were the vps' that reported a host down</span></div>
<div class="ln k" style="top:263px"><span class="ts">(08:59:08 AM)</span> <span class="nm">klausk:</span> <span class="tx">If that happens again we can at least try twice instead of just once</span></div>
<div class="ln k" style="top:285px"><span class="ts">(08:59:53 AM)</span> <span class="nm">klausk:</span> <span class="tx">Interesting though that everything was clean with 100 containers and doubling that caused issues</span></div>
<div class="ln j" style="top:307px"><span class="ts">(09:00:04 AM)</span> <span class="nm">josephm:</span> <span class="tx">it may have just been bad luck</span></div>
<div class="ln j" style="top:329px"><span class="ts">(09:00:11 AM)</span> <span class="nm">josephm:</span> <span class="tx">and container count was irrelevant</span></div>
<div class="ln t" style="top:351px"><span class="ts">(09:00:20 AM)</span> <span class="nm">treyf:</span> <span class="tx">still a small sample time.</span></div>
<div class="ln j" style="top:373px"><span class="ts">(09:00:22 AM)</span> <span class="nm">josephm:</span> <span class="tx">couldve still happened with only one containers</span></div>
<div class="ln j" style="top:395px"><span class="ts">(09:00:22 AM)</span> <span class="nm">josephm:</span> <span class="tx">yea</span></div>
<div class="ln j" style="top:417px"><span class="ts">(09:00:26 AM)</span> <span class="nm">josephm:</span> <span class="tx">only 100 containers*</span></div>
<div class="ln k" style="top:439px"><span class="ts">(09:01:30 AM)</span> <span class="nm">klausk:</span> <span class="tx">max_check_attempts is still set to 1, right?</span></div>
<div class="ln j" style="top:461px"><span class="ts">(09:01:45 AM)</span> <span class="nm">josephm:</span> <span class="tx">yes i didnt change the config because we'd have to update it in the puppet configs</span></div>
<div class="ln k" style="top:483px"><span class="ts">(09:01:59 AM)</span> <span class="nm">klausk:</span> <span class="tx">I see</span></div>
<div class="ln j" style="top:505px"><span class="ts">(09:02:10 AM)</span> <span class="nm">josephm:</span> <span class="tx">i havent looked at the code in a long time and it may not differentiate between dedis and vps</span></div>
<div class="ln j" style="top:527px"><span class="ts">(09:25:20 AM)</span> <span class="nm">josephm:</span> <span class="tx">LACP port priority determines the port that is active in a LAG in fallback mode. Numerically lower values have higher priority (priority numbers range</span></div>
<div class="ln j" style="top:544px"><span class="tx">from 0 to 65535, the default being 32768). Interfaces with higher priority numbers are placed in standby mode.  This command is optional, but gives a deterministic way to</span></div>
<div class="ln j" style="top:561px"><span class="tx">allocate the port which will be active until the expiry of the timer.</span></div>
<div class="ln j" style="top:583px"><span class="ts">(09:25:35 AM)</span> <span class="nm">josephm:</span> <span class="tx">we will need to do that for PXE to work reliably</span></div>
<div class="ln j" style="top:605px"><span class="ts">(09:25:48 AM)</span> <span class="nm">josephm:</span> <span class="tx">currently they're set to the same prio so its random which port gets the active channel</span></div>
<div class="ln e" style="top:627px"><span class="ts">(09:28:18 AM)</span> <span class="nm">eriks:</span> <span class="tx">on the ToR switches?</span></div>
<div class="ln j" style="top:649px"><span class="ts">(09:28:53 AM)</span> <span class="nm">josephm:</span> <span class="tx">yes</span></div>
<div class="ln h" style="top:671px"><span class="ts">(09:29:04 AM)</span> <span class="nm">josephm:</span> <span class="tx">what chases experienced is not matching arista docs</span></div>
<div class="ln j" style="top:693px"><span class="ts">(09:29:12 AM)</span> <span class="nm">josephm:</span> <span class="tx">The port with the least priority will be placed into the active state when the port-channel is in fallback mode.  If all ports in a port-channel have the same</span></div>
<div class="ln j" style="top:710px"><span class="tx">port-priority (default), the switch has an internal algorithm that compares interface names (Ethernet 1, Ethernet 2, etc.) in order to break the tie. The algorithm compares two</span></div>
<div class="ln j" style="top:727px"><span class="tx">interface names by base name, then by module number (if any) and finally by port number (if any) and selects the port that is lowest in this ordering; i.e. Ethernet1 &lt; Ethernet2,</span></div>
<div class="ln j" style="top:744px"><span class="tx">hence we choose Ethernet1 to become active.</span></div>
<div class="ln h" style="top:766px"><span class="ts">(09:29:21 AM)</span> <span class="nm">josephm:</span> <span class="tx">chases said it was more like 50/50 random which port got it</span></div>
<div class="ln j" style="top:788px"><span class="ts">(09:30:44 AM)</span> <span class="nm">josephm:</span> <span class="tx">guess we got a lot of testing to do :\</span></div>
<div class="ln c" style="top:810px"><span class="ts">(09:34:59 AM)</span> <span class="nm">chases:</span> <span class="tx">Yeah I definitely had instances where it worked on either eth port. Got used to trying the first one and if it didn't work trying the second one. We discussed</span></div>
<div class="ln c" style="top:827px"><span class="tx">the way to resolve that being that the pxe server would listen for connections on either of the ports though rather than fixing it from the switch side.</span></div>
<div class="ln j" style="top:849px"><span class="ts">(09:39:12 AM)</span> <span class="nm">josephm:</span> <span class="tx">yea but dan brought up a decent point about that</span></div>
<div class="ln j" style="top:871px"><span class="ts">(09:39:26 AM)</span> <span class="nm">josephm:</span> <span class="tx">if the server reboots, which it does during an OS install, it could flip to using the other ether port</span></div>
<div class="ln j" style="top:893px"><span class="ts">(09:39:29 AM)</span> <span class="nm">josephm:</span> <span class="tx">and rePXE itself</span></div>
<div class="ln c" style="top:915px"><span class="ts">(09:41:51 AM)</span> <span class="nm">chases:</span> <span class="tx">My understanding is he was going to bond the listening side so it seems like that bond would still understand the already_pxe option that gets set to</span></div>
<div class="ln c" style="top:932px"><span class="tx">prevent the re-pxe from happening?</span></div>
<div id="redline"></div>
<div id="cscroll"></div>
</div></div>
<div id="grip"></div>
<div id="ulabel">10 people in room</div>
<div id="ulist"><div class="vs"></div>
<div class="u" style="top:-1px;color:#204a87"><svg width="16" height="16" viewBox="0 0 16 16" style="position:absolute;left:2px;top:4px"><rect x="1.3" y="2" width="2.4" height="13" fill="#e6e6e0" stroke="#777" stroke-width=".7"/><path d="M3.4 2.4 H15.3 L11.6 7.5 L15.3 12.6 H3.4Z" fill="url(#fg)" stroke="#204a87" stroke-width="1.1"/><rect x=".3" y=".3" width="4.6" height="2.6" rx="1.3" fill="#edd400" stroke="#c4a000" stroke-width=".6"/></svg><span>chases</span></div>
<div class="u" style="top:22px;color:#1f3f1f"><svg width="16" height="16" viewBox="0 0 16 16" style="position:absolute;left:2px;top:4px"><rect x="1.3" y="2" width="2.4" height="13" fill="#e6e6e0" stroke="#777" stroke-width=".7"/><path d="M3.4 2.4 H15.3 L11.6 7.5 L15.3 12.6 H3.4Z" fill="url(#fg)" stroke="#204a87" stroke-width="1.1"/><rect x=".3" y=".3" width="4.6" height="2.6" rx="1.3" fill="#edd400" stroke="#c4a000" stroke-width=".6"/></svg><span>eriks</span></div>
<div class="u" style="top:45px;color:#dc2660"><svg width="16" height="16" viewBox="0 0 16 16" style="position:absolute;left:2px;top:4px"><rect x="1.3" y="2" width="2.4" height="13" fill="#e6e6e0" stroke="#777" stroke-width=".7"/><path d="M3.4 2.4 H15.3 L11.6 7.5 L15.3 12.6 H3.4Z" fill="url(#fg)" stroke="#204a87" stroke-width="1.1"/><rect x=".3" y=".3" width="4.6" height="2.6" rx="1.3" fill="#edd400" stroke="#c4a000" stroke-width=".6"/></svg><span>josephm</span></div>
<div class="u" style="top:68px;color:#6f8f1f"><svg width="16" height="16" viewBox="0 0 16 16" style="position:absolute;left:2px;top:4px"><rect x="1.3" y="2" width="2.4" height="13" fill="#e6e6e0" stroke="#777" stroke-width=".7"/><path d="M3.4 2.4 H15.3 L11.6 7.5 L15.3 12.6 H3.4Z" fill="url(#fg)" stroke="#204a87" stroke-width="1.1"/><rect x=".3" y=".3" width="4.6" height="2.6" rx="1.3" fill="#edd400" stroke="#c4a000" stroke-width=".6"/></svg><span>klausk</span></div>
<div class="u" style="top:91px;color:#dc143c"><svg width="16" height="16" viewBox="0 0 16 16" style="position:absolute;left:2px;top:4px"><rect x="1.3" y="2" width="2.4" height="13" fill="#e6e6e0" stroke="#777" stroke-width=".7"/><path d="M3.4 2.4 H15.3 L11.6 7.5 L15.3 12.6 H3.4Z" fill="url(#fg)" stroke="#204a87" stroke-width="1.1"/><rect x=".3" y=".3" width="4.6" height="2.6" rx="1.3" fill="#edd400" stroke="#c4a000" stroke-width=".6"/></svg><span>treyf</span></div>
<div class="u" style="top:114px;color:#2e8b57"><svg width="16" height="16" viewBox="0 0 16 16" style="position:absolute;left:2px;top:4px"><rect x="1.3" y="2" width="2.4" height="13" fill="#e6e6e0" stroke="#777" stroke-width=".7"/><path d="M3.4 2.4 H15.3 L11.6 7.5 L15.3 12.6 H3.4Z" fill="url(#fg)" stroke="#204a87" stroke-width="1.1"/><rect x=".3" y=".3" width="4.6" height="2.6" rx="1.3" fill="#edd400" stroke="#c4a000" stroke-width=".6"/></svg><span>vanessav</span></div>
<div class="u" style="top:137px;color:#4169e1"><svg width="16" height="16" viewBox="0 0 16 16" style="position:absolute;left:2px;top:4px"><rect x="1.3" y="2" width="2.4" height="13" fill="#e6e6e0" stroke="#777" stroke-width=".7"/><path d="M3.4 2.4 H15.3 L11.6 7.5 L15.3 12.6 H3.4Z" fill="url(#fg)" stroke="#204a87" stroke-width="1.1"/><rect x=".3" y=".3" width="4.6" height="2.6" rx="1.3" fill="#edd400" stroke="#c4a000" stroke-width=".6"/></svg><span>yuriys</span></div>
<div class="u" style="top:160px;color:#5a2be2"><svg width="16" height="16" viewBox="0 0 16 16" style="position:absolute;left:2px;top:4px"><circle cx="8" cy="8" r="2" fill="#3465a4" stroke="#204a87" stroke-width=".5"/><path d="M5.8 4.4 Q3.2 8 5.8 11.6 M10.2 4.4 Q12.8 8 10.2 11.6" fill="none" stroke="#3465a4" stroke-width="1.1" stroke-linecap="round"/><path d="M4.6 2.2 Q.4 8 4.6 13.8 M11.4 2.2 Q15.6 8 11.4 13.8" fill="none" stroke="#3f6cab" stroke-width=".95" stroke-linecap="round"/><path d="M3.2 .6 Q-2.2 8 3.2 15.4 M12.8 .6 Q18.2 8 12.8 15.4" fill="none" stroke="#5f84ba" stroke-width=".85" stroke-linecap="round"/></svg><span>Crees</span></div>
<div class="u" style="top:183px;color:#7a3030"><svg width="16" height="16" viewBox="0 0 16 16" style="position:absolute;left:2px;top:4px"><circle cx="8" cy="8" r="2" fill="#3465a4" stroke="#204a87" stroke-width=".5"/><path d="M5.8 4.4 Q3.2 8 5.8 11.6 M10.2 4.4 Q12.8 8 10.2 11.6" fill="none" stroke="#3465a4" stroke-width="1.1" stroke-linecap="round"/><path d="M4.6 2.2 Q.4 8 4.6 13.8 M11.4 2.2 Q15.6 8 11.4 13.8" fill="none" stroke="#3f6cab" stroke-width=".95" stroke-linecap="round"/><path d="M3.2 .6 Q-2.2 8 3.2 15.4 M12.8 .6 Q18.2 8 12.8 15.4" fill="none" stroke="#5f84ba" stroke-width=".85" stroke-linecap="round"/></svg><span>jonb</span></div>
<div class="u" style="top:206px;color:#4a6e96"><svg width="16" height="16" viewBox="0 0 16 16" style="position:absolute;left:2px;top:4px"><circle cx="8" cy="8" r="2" fill="#3465a4" stroke="#204a87" stroke-width=".5"/><path d="M5.8 4.4 Q3.2 8 5.8 11.6 M10.2 4.4 Q12.8 8 10.2 11.6" fill="none" stroke="#3465a4" stroke-width="1.1" stroke-linecap="round"/><path d="M4.6 2.2 Q.4 8 4.6 13.8 M11.4 2.2 Q15.6 8 11.4 13.8" fill="none" stroke="#3f6cab" stroke-width=".95" stroke-linecap="round"/><path d="M3.2 .6 Q-2.2 8 3.2 15.4 M12.8 .6 Q18.2 8 12.8 15.4" fill="none" stroke="#5f84ba" stroke-width=".85" stroke-linecap="round"/></svg><span>ryanw</span></div>
</div>
<div id="inbox"><div id="tb">
<svg style="left:8px;top:10px" width="14" height="12" viewBox="0 0 14 12"><path d="M2.6 .4 H10.4 Q13.6 .4 13.6 3.6 V9 Q13.6 11.6 11 11.6 H3.2 Q.4 11.6 .4 8.4 Q.4 5.4 2.6 4.9Z" fill="#565656" stroke="#3a3a3a" stroke-width=".8"/><rect x="3.2" y="1.4" width="6.6" height=".9" fill="#8c8c8c"/><rect x="3.2" y="2.6" width="6.2" height="2" fill="#3e3e3e"/><rect x="3.4" y="5.2" width="5.6" height=".8" fill="#7a7a7a"/><rect x="5.2" y="7" width="3.8" height="1.8" fill="#383838"/><rect x="5.2" y="9.2" width="3.8" height=".7" fill="#7a7a7a"/></svg>
<span style="left:26px">Font</span>
<div class="sep" style="left:56px"></div>
<svg style="left:66px;top:9px" width="13" height="13" viewBox="0 0 13 13"><path d="M5 .8 H8 V5 H12.2 V8 H8 V12.2 H5 V8 H.8 V5 H5Z" fill="#a4c4ee" stroke="#2f62ab" stroke-width="1.1"/></svg>
<span style="left:83px">Insert</span>
<div class="sep" style="left:121px"></div>
<svg style="left:129px;top:7px" width="16" height="16" viewBox="0 0 16 16"><defs><radialGradient id="sg" cx=".5" cy=".4" r=".6"><stop offset="0" stop-color="#f7d257"/><stop offset="1" stop-color="#e9b23a"/></radialGradient></defs><circle cx="8" cy="8" r="7.3" fill="url(#sg)" stroke="#a5701a" stroke-width="1.2"/><path d="M4.2 3.2 Q5.3 2.4 6.4 3.2 M9.6 3.2 Q10.7 2.4 11.8 3.2" stroke="#d9780e" stroke-width=".9" fill="none"/><path d="M3.3 6.4 Q5.6 3.6 8 5.8 Q10.4 3.6 12.7 6.4" stroke="#f0902a" stroke-width="1" fill="none"/><ellipse cx="5.7" cy="7.1" rx="1.9" ry="1.8" fill="#fff"/><ellipse cx="10.3" cy="7.1" rx="1.9" ry="1.8" fill="#fff"/><ellipse cx="6.6" cy="7.1" rx=".65" ry="1.15" fill="#222"/><ellipse cx="9.4" cy="7.1" rx=".65" ry="1.15" fill="#222"/><path d="M3.9 10.2 Q8 14.2 12.1 10.2" stroke="#9c5a10" stroke-width="1.1" fill="none" stroke-linecap="round"/></svg>
<span style="left:148px">Smile!</span>
<div class="sep" style="left:188px"></div>
<svg style="left:196px;top:7px" width="16" height="16" viewBox="0 0 16 16"><circle cx="8" cy="8" r="7.3" fill="#e2e2e2" stroke="#cdcdcd" stroke-width="1.1"/><circle cx="8" cy="8" r="6.2" fill="none" stroke="#efefef" stroke-width=".8"/><rect x="7" y="2.8" width="2" height="6.8" rx="1" fill="#fbfbfb" stroke="#c6c6c6" stroke-width=".5"/><circle cx="8" cy="11.9" r="1.15" fill="#fbfbfb" stroke="#c6c6c6" stroke-width=".5"/></svg>
<span style="left:215px;color:#8c8c8c">Attention!</span>
</div></div>

</body></html>
